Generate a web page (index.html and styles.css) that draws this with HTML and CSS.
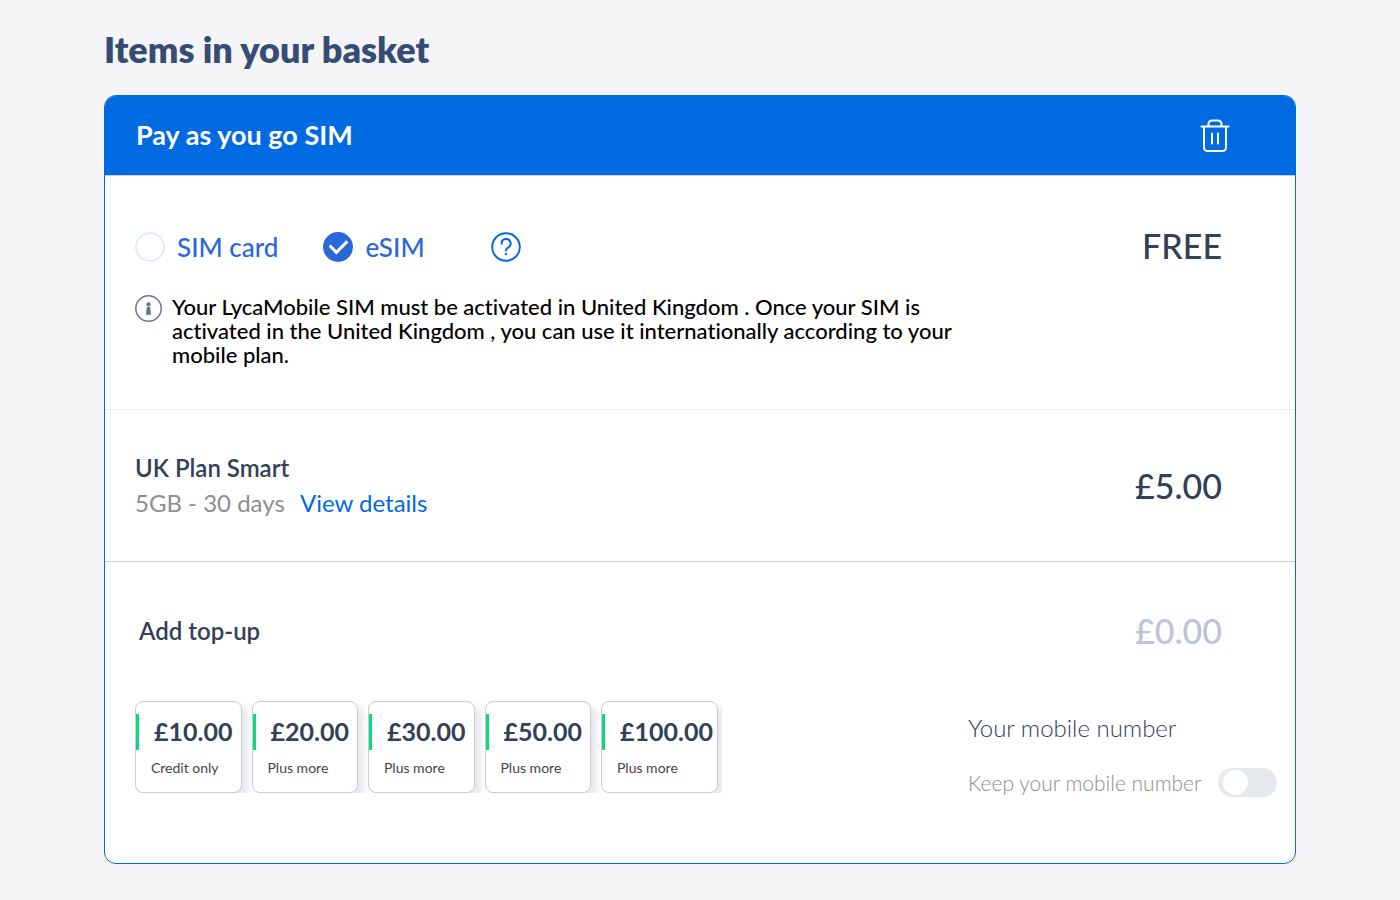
FILE: index.html
```html
<!DOCTYPE html>
<html lang="en">
<head>
  <meta charset="UTF-8">
  <meta name="viewport" content="width=device-width, initial-scale=1">
  <title>Basket</title>
  <link rel="stylesheet" href="styles.css">
</head>
<body>
  <main class="basket">
    <h1 class="basket_title">Items in your basket</h1>

    <section class="card">
      <header class="card_header">
        <h2 class="card_title">Pay as you go SIM</h2>
        <button type="button" class="icon_btn" aria-label="Remove item">
          <svg width="30" height="34" viewBox="0 0 30 34" fill="none" stroke="#fff" stroke-width="2" stroke-linecap="round">
            <path d="M1.500 7.500h27"/>
            <path d="M8.500 7V5a3.500 3.500 0 0 1 3.500-3.500h6A3.500 3.500 0 0 1 21.500 5v2"/>
            <path d="M4 8v20.500a3.500 3.500 0 0 0 3.500 3.500h15a3.500 3.500 0 0 0 3.500-3.500V8"/>
            <path d="M12 14.500v10M18 14.500v10"/>
          </svg>
        </button>
      </header>

      <div class="row row_sim">
        <div class="row_main">
          <div class="sim_types">
            <label class="sim_type"><input type="radio" name="sim">SIM card</label>
            <label class="sim_type"><input type="radio" name="sim" checked>eSIM</label>
            <button type="button" class="icon_btn help" aria-label="Help">
              <svg width="30" height="30" viewBox="0 0 30 30" fill="none" stroke="#006ae0" stroke-width="2" stroke-linecap="round" stroke-linejoin="round">
                <circle cx="15" cy="15" r="13.800"/>
                <path d="M10.600 11.800a4.500 4.500 0 1 1 6.700 3.600c-1.500.9-2.300 1.500-2.300 3"/>
                <circle cx="15" cy="22" r="1.200" fill="#006ae0" stroke="none"/>
              </svg>
            </button>
          </div>
          <div class="note">
            <svg width="27" height="27" viewBox="0 0 27 27">
              <circle cx="13.500" cy="13.500" r="12.700" fill="none" stroke="#6b758a" stroke-width="1.500"/>
              <circle cx="13.500" cy="9.300" r="2.100" fill="#6b758a"/>
              <path d="M12.200 12h2.600l1 7.500h-4.600z" fill="#6b758a" stroke="#6b758a" stroke-width=".6" stroke-linejoin="round"/>
            </svg>
            <p>Your LycaMobile SIM must be activated in United Kingdom . Once your SIM is activated in the United Kingdom , you can use it internationally according to your mobile plan.</p>
          </div>
        </div>
        <span class="price">FREE</span>
      </div>

      <div class="row row_plan">
        <div class="row_main">
          <h3 class="plan_name">UK Plan Smart</h3>
          <p class="plan_info">5GB - 30 days <a href="#">View details</a></p>
        </div>
        <span class="price">£5.00</span>
      </div>

      <div class="row_topup">
        <div class="topup_head">
          <h3 class="plan_name">Add top-up</h3>
          <span class="price price_empty">£0.00</span>
        </div>
        <div class="topup_body">
          <div class="topups">
            <button type="button" class="topup"><b>£10.00</b><span>Credit only</span></button>
            <button type="button" class="topup"><b>£20.00</b><span>Plus more</span></button>
            <button type="button" class="topup"><b>£30.00</b><span>Plus more</span></button>
            <button type="button" class="topup"><b>£50.00</b><span>Plus more</span></button>
            <button type="button" class="topup"><b>£100.00</b><span>Plus more</span></button>
          </div>
          <div class="number">
            <h4 class="number_title">Your mobile number</h4>
            <label class="keep">Keep your mobile number <input type="checkbox" class="switch"></label>
          </div>
        </div>
      </div>
    </section>
  </main>
</body>
</html>
```
FILE: styles.css
```css
* {
  box-sizing: border-box;
}
body {
  margin: 0;
  background: #f5f5f7;
  color: #334056;
  font-family: Lato, "Open Sans", sans-serif;
  font-variant-ligatures: none;
}
h1, h2, h3, h4, p {
  margin: 0;
}
button {
  font-family: inherit;
  cursor: pointer;
}
svg {
  display: block;
  flex: none;
}
.basket {
  margin: 0 104px;
  padding: 27px 0 36px;
}
.basket_title {
  margin-bottom: 24px;
  color: #374c74;
  font-size: 36px;
  line-height: 44px;
  font-weight: 800;
}
.card {
  border: 1px solid #006ae0;
  border-radius: 12px;
  background: #fff;
  overflow: hidden;
}
.card_header {
  display: flex;
  align-items: center;
  justify-content: space-between;
  height: 80px;
  padding: 0 65px 0 31px;
  background: #006ae0;
  border-bottom: 1px solid #c4cfe6;
}
.card_title {
  padding-bottom: 2px;
  color: #fff;
  font-size: 27px;
  font-weight: 700;
}
.icon_btn {
  padding: 0;
  border: 0;
  background: none;
}
.row {
  display: flex;
  justify-content: space-between;
  padding: 0 73px 0 30px;
}
.row_sim {
  padding-top: 51px;
  padding-bottom: 42px;
  border-bottom: 1px solid #eceef2;
}
.sim_types {
  display: flex;
  align-items: center;
  height: 40px;
}
.sim_type {
  display: flex;
  align-items: center;
  gap: 12px;
  margin-right: 45px;
  color: #2b67d9;
  font-size: 26px;
  font-weight: 500;
}
.sim_type input {
  display: grid;
  place-items: center;
  appearance: none;
  width: 30px;
  height: 30px;
  margin: 0;
  border: 2px solid #e0ebff;
  border-radius: 50%;
}
.sim_type input:checked {
  border-color: #2b67d9;
  background: #2b67d9;
}
.sim_type input:checked::after {
  content: "";
  width: 8px;
  height: 14px;
  margin-bottom: 5px;
  border: solid #fff;
  border-width: 0 3px 3px 0;
  transform: rotate(45deg);
}
.help {
  margin-left: 21px;
}
.note {
  display: flex;
  gap: 10px;
  margin-top: 28px;
}
.note p {
  max-width: 800px;
  color: #000;
  font-size: 22px;
  line-height: 24px;
  font-weight: 500;
}
.price {
  font-size: 34px;
  line-height: 38px;
  font-weight: 500;
}
.price_empty {
  color: #bcc4d6;
}
.row_plan {
  align-items: center;
  height: 152px;
  border-bottom: 1px solid #c9cbcf;
}
.plan_name {
  font-size: 24px;
  line-height: 34px;
  font-weight: 600;
}
.plan_info {
  color: #8e8e8e;
  font-size: 24px;
  line-height: 36px;
}
.plan_info a {
  margin-left: 9px;
  color: #006ae0;
  text-decoration: none;
}
.row_topup {
  padding: 50px 18px 66px 30px;
}
.topup_head {
  display: flex;
  align-items: center;
  justify-content: space-between;
  height: 38px;
  padding: 0 55px 0 4px;
}
.topup_body {
  display: flex;
  justify-content: space-between;
  margin-top: 51px;
}
.topups {
  display: grid;
  grid-template-columns: repeat(4, 1fr) 117px;
  gap: 10px;
  flex: 0 1 587px;
  height: 92px;
  padding-right: 4px;
  overflow: hidden;
}
.topup {
  position: relative;
  display: flex;
  flex-direction: column;
  height: 92px;
  padding: 13px 0 0 15px;
  border: 1px solid #c9cbcf;
  border-radius: 8px;
  background: #fff;
  box-shadow: 6px 5px 6px #e8e9ef;
  color: #334056;
  text-align: left;
}
.topup::before {
  content: "";
  position: absolute;
  top: 12px;
  left: 0;
  width: 3px;
  height: 36px;
  background: #0bd97d;
}
.topup b {
  margin-left: 3px;
  font-size: 25px;
  line-height: 32px;
}
.topup span {
  margin-top: 11px;
  color: #444;
  font-size: 14px;
  line-height: 20px;
}
.number {
  width: 309px;
  padding-top: 11px;
}
.number_title {
  font-size: 24px;
  line-height: 32px;
  font-weight: 300;
}
.keep {
  display: flex;
  align-items: center;
  justify-content: space-between;
  margin-top: 24px;
  color: #8e8e8e;
  font-size: 21px;
  font-weight: 300;
}
.switch {
  display: flex;
  align-items: center;
  appearance: none;
  width: 59px;
  height: 29px;
  margin: 0;
  padding: 0 5px;
  border-radius: 15px;
  background: #e5e8ed;
}
.switch::before {
  content: "";
  width: 25px;
  height: 25px;
  border-radius: 50%;
  background: #fff;
}
.switch:checked {
  justify-content: flex-end;
  background: #006ae0;
}
```
